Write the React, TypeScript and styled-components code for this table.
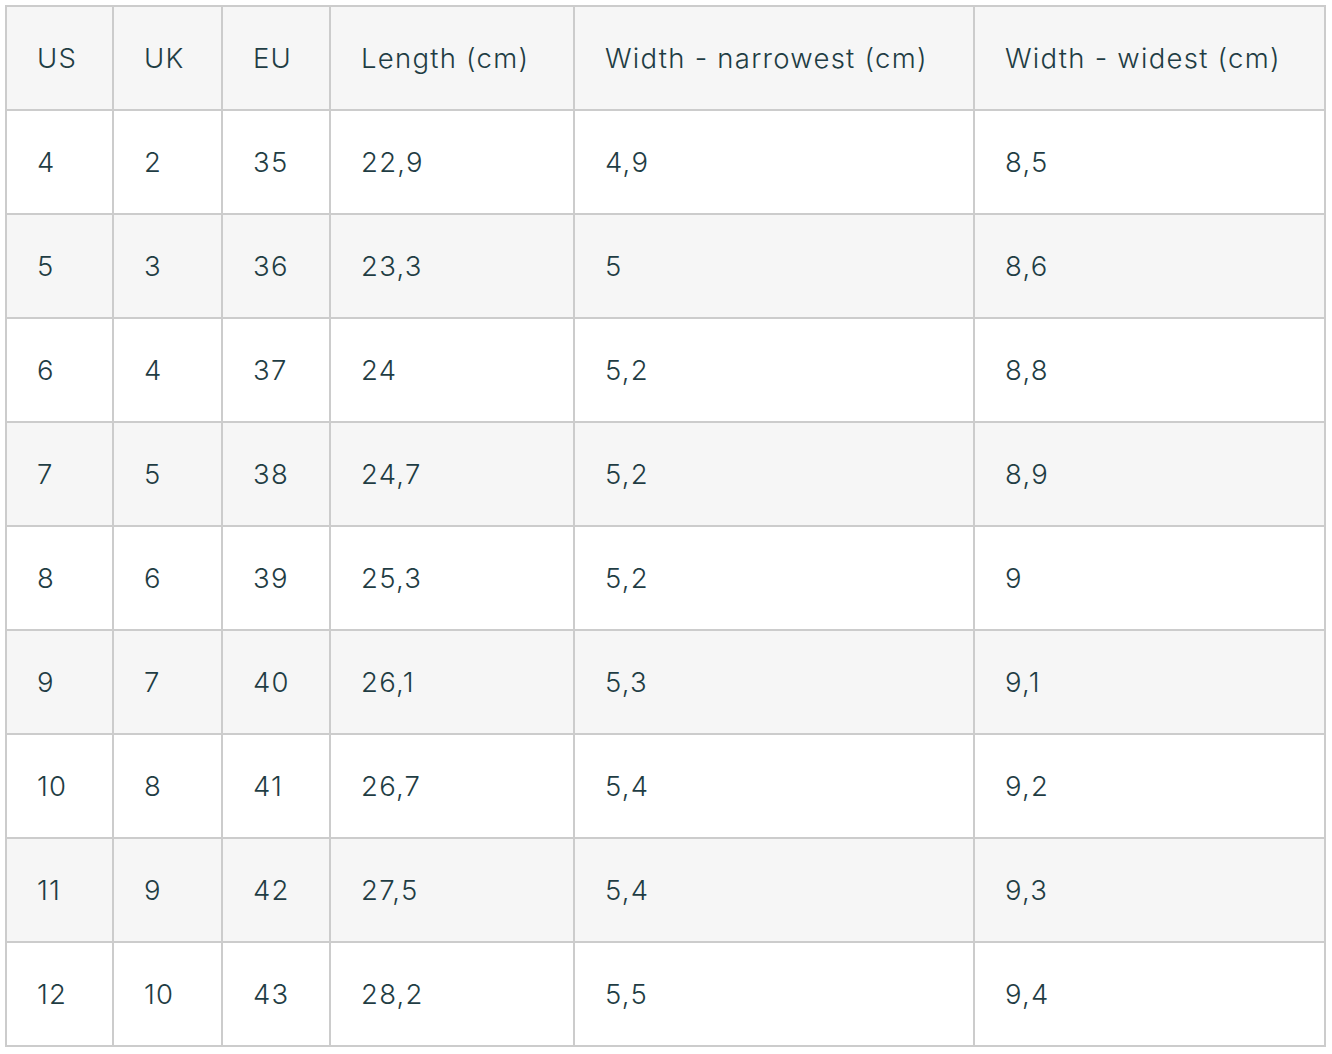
import React from "react";
import styled, { createGlobalStyle } from "styled-components";

const Global = createGlobalStyle`
  html, body { margin: 0; padding: 0; background: #ffffff; }
  body { font-family: Inter, "Open Sans", "Liberation Sans", sans-serif; }
`;

const Page = styled.div`
  padding: 5px 0 0 5px;
`;

const Table = styled.table`
  border-collapse: collapse;
  table-layout: fixed;
  width: 1321px;
  border: 2px solid #cccccc;
`;

const Col = styled.col<{ $w: number }>`
  width: ${(p) => p.$w}px;
`;

const Row = styled.tr<{ $shaded: boolean }>`
  background: ${(p) => (p.$shaded ? "#f6f6f6" : "#ffffff")};
`;

const cellBase = `
  border: 2px solid #cccccc;
  height: 104px;
  box-sizing: border-box;
  padding: 0 0 0 30px;
  text-align: left;
  vertical-align: middle;
  font-size: 27.5px;
  font-weight: 300;
  letter-spacing: 1.25px;
  color: #1f3d44;
  white-space: nowrap;
`;

const HeadCell = styled.th`
  ${cellBase}
`;

const Cell = styled.td`
  ${cellBase}
`;

const widths = [107, 109, 108, 244, 400, 351];
const headers = ["US", "UK", "EU", "Length (cm)", "Width - narrowest (cm)", "Width - widest (cm)"];
const rows: string[][] = [
  ["4", "2", "35", "22,9", "4,9", "8,5"],
  ["5", "3", "36", "23,3", "5", "8,6"],
  ["6", "4", "37", "24", "5,2", "8,8"],
  ["7", "5", "38", "24,7", "5,2", "8,9"],
  ["8", "6", "39", "25,3", "5,2", "9"],
  ["9", "7", "40", "26,1", "5,3", "9,1"],
  ["10", "8", "41", "26,7", "5,4", "9,2"],
  ["11", "9", "42", "27,5", "5,4", "9,3"],
  ["12", "10", "43", "28,2", "5,5", "9,4"],
];

export default function App() {
  return (
    <>
      <Global />
      <Page>
        <Table>
          <colgroup>
            {widths.map((w, i) => (
              <Col key={i} $w={w} />
            ))}
          </colgroup>
          <thead>
            <Row $shaded={true}>
              {headers.map((h) => (
                <HeadCell key={h}>{h}</HeadCell>
              ))}
            </Row>
          </thead>
          <tbody>
            {rows.map((r, i) => (
              <Row key={i} $shaded={i % 2 === 1}>
                {r.map((c, j) => (
                  <Cell key={j}>{c}</Cell>
                ))}
              </Row>
            ))}
          </tbody>
        </Table>
      </Page>
    </>
  );
}
